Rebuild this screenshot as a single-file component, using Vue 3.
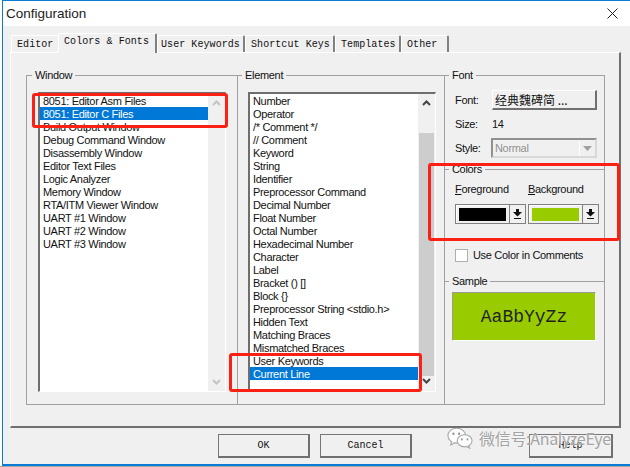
<script setup>
const tabs = [
  { name: 'Editor', cls: 't-editor' },
  { name: 'Colors & Fonts', cls: 't-colors' },
  { name: 'User Keywords', cls: 't-user' },
  { name: 'Shortcut Keys', cls: 't-short' },
  { name: 'Templates', cls: 't-tmpl' },
  { name: 'Other', cls: 't-other' }
]
const windows = [
  '8051: Editor Asm Files', '8051: Editor C Files', 'Build Output Window', 'Debug Command Window',
  'Disassembly Window', 'Editor Text Files', 'Logic Analyzer', 'Memory Window',
  'RTA/ITM Viewer Window', 'UART #1 Window', 'UART #2 Window', 'UART #3 Window'
]
const elements = [
  'Number', 'Operator', '/* Comment */', '// Comment', 'Keyword', 'String', 'Identifier',
  'Preprocessor Command', 'Decimal Number', 'Float Number', 'Octal Number', 'Hexadecimal Number',
  'Character', 'Label', 'Bracket () []', 'Block {}', 'Preprocessor String <stdio.h>', 'Hidden Text',
  'Matching Braces', 'Mismatched Braces', 'User Keywords', 'Current Line'
]
</script>

<template>
  <div class="desk">
    <div class="win">
      <header class="title">
        <span class="title-text">Configuration</span>
        <svg class="close" width="11" height="11" viewBox="0 0 11 11"><path d="M.5.5l10 10M10.500.5l-10 10" stroke="#222" stroke-width="1" fill="none"/></svg>
      </header>
      <main class="body">
        <nav class="tabs">
          <div v-for="(t, i) in tabs" :key="t.name" class="tab" :class="[t.cls, { active: i === 1 }]">{{ t.name }}</div>
        </nav>
        <section class="panel">
          <div class="groups">
            <fieldset class="group g-window">
              <legend>Window</legend>
              <div class="list">
                <div class="items">
                  <div v-for="(w, i) in windows" :key="w" class="item" :class="{ sel: i === 1 }">{{ w }}</div>
                </div>
                <div class="scroll off">
                  <svg width="9" height="6" viewBox="0 0 9 6"><path d="M1 5l3.500-3.500L8 5" stroke="#c4c4c4" stroke-width="2" fill="none"/></svg>
                  <svg width="9" height="6" viewBox="0 0 9 6"><path d="M1 1l3.500 3.500L8 1" stroke="#c4c4c4" stroke-width="2" fill="none"/></svg>
                </div>
              </div>
            </fieldset>
            <fieldset class="group g-element">
              <legend>Element</legend>
              <div class="list">
                <div class="items">
                  <div v-for="(e, i) in elements" :key="e" class="item" :class="{ sel: i === 21 }">{{ e }}</div>
                </div>
                <div class="scroll on">
                  <svg class="arrow" width="9" height="6" viewBox="0 0 9 6"><path d="M1 5l3.500-3.500L8 5" stroke="#444" stroke-width="2" fill="none"/></svg>
                  <div class="thumb"></div>
                  <svg class="arrow" width="9" height="6" viewBox="0 0 9 6"><path d="M1 1l3.500 3.500L8 1" stroke="#444" stroke-width="2" fill="none"/></svg>
                </div>
              </div>
            </fieldset>
            <fieldset class="group g-font">
              <legend>Font</legend>
              <div class="row r-font">
                <span class="lab">Font:</span>
                <div class="raised font-btn">经典魏碑简 ...</div>
              </div>
              <div class="row r-size"><span class="lab">Size:</span><span>14</span></div>
              <div class="row r-style">
                <span class="lab">Style:</span>
                <div class="combo">
                  <span>Normal</span>
                  <span class="combo-btn"><svg width="9" height="5" viewBox="0 0 9 5"><path d="M0 0h9L4.500 5z" fill="#a0a0a0"/></svg></span>
                </div>
              </div>
              <fieldset class="sub sub-colors">
                <legend>Colors</legend>
                <div class="pair">
                  <div class="col">
                    <div class="col-lab"><u>F</u>oreground</div>
                    <div class="swatch-btn">
                      <span class="swatch black"></span>
                      <span class="drop"><svg width="9" height="10" viewBox="0 0 9 10"><path d="M3 0h3v3h3L4.500 7.500 0 3h3zM1 9h7v1H1z" fill="#111"/></svg></span>
                    </div>
                  </div>
                  <div class="col">
                    <div class="col-lab"><u>B</u>ackground</div>
                    <div class="swatch-btn">
                      <span class="swatch green"></span>
                      <span class="drop"><svg width="9" height="10" viewBox="0 0 9 10"><path d="M3 0h3v3h3L4.500 7.500 0 3h3zM1 9h7v1H1z" fill="#111"/></svg></span>
                    </div>
                  </div>
                </div>
              </fieldset>
              <div class="check-row">
                <span class="check"></span>
                <span>Use Color in Comments</span>
              </div>
              <fieldset class="sub sub-sample">
                <legend>Sample</legend>
                <div class="sample">AaBbYyZz</div>
              </fieldset>
            </fieldset>
          </div>
        </section>
        <footer class="actions">
          <div class="raised btn b-ok">OK</div>
          <div class="raised btn b-cancel">Cancel</div>
          <div class="raised btn b-help">Help</div>
        </footer>
      </main>
    </div>
    <div class="strip"></div>

    <div class="mark m1"></div>
    <div class="mark m2"></div>
    <div class="mark m3"></div>

    <div class="wm">
      <svg width="26" height="22" viewBox="0 0 28 23">
        <ellipse cx="10.500" cy="9" rx="9.500" ry="8" fill="#fff" stroke="#a8a8a8" stroke-width="1.200"/>
        <path d="M5 15l-1 4 4.500-2.500" fill="#fff" stroke="#a8a8a8" stroke-width="1.200"/>
        <ellipse cx="19" cy="14.500" rx="8" ry="6.500" fill="#fff" stroke="#a8a8a8" stroke-width="1.200"/>
        <path d="M23 19.500l1.500 3-4-2" fill="#fff" stroke="#a8a8a8" stroke-width="1.200"/>
        <circle cx="7" cy="7" r="1.300" fill="#999"/><circle cx="13" cy="7" r="1.300" fill="#999"/>
        <circle cx="16" cy="13" r="1.100" fill="#999"/><circle cx="22" cy="13" r="1.100" fill="#999"/>
      </svg>
      <span>微信号:AnalyzeEye</span>
    </div>
  </div>
</template>

<style>
html, body { margin: 0; padding: 0; background: #fff; }
</style>

<style scoped>
.desk {
  position: relative;
  width: 630px;
  height: 467px;
  overflow: hidden;
  background: #fff;
  font: 11px/13px "Liberation Sans", Arial, "Noto Sans CJK SC", sans-serif;
  letter-spacing: -0.32px;
  color: #111;
}
.win {
  box-sizing: border-box;
  width: 628px;
  height: 466px;
  margin-left: 2px;
  border: 1px solid #0a7ad4;
  border-right: 0;
  border-bottom-width: 2px;
  display: flex;
  flex-direction: column;
  background: #f0f0f0;
}
.strip { height: 1px; background: #a8a8a8; }
.title {
  height: 25px;
  flex: none;
  background: #fff;
  display: flex;
  align-items: center;
  justify-content: space-between;
  padding: 0 12px 0 3px;
}
.title-text { font-size: 13.500px; letter-spacing: 0; color: #222; }
.body { flex: 1; padding: 7px 0 0 7px; display: flex; flex-direction: column; min-height: 0; }
.tabs {
  display: flex;
  align-items: flex-end;
  height: 19px;
  padding-left: 1px;
  position: relative;
  z-index: 1;
}
.tab {
  box-sizing: border-box;
  height: 17px;
  font: 10px/17px "Liberation Mono", monospace;
  color: #111;
  padding-left: 5px;
  border-top: 1px solid #fff;
  border-left: 1px solid #fff;
  border-right: 2px solid #808080;
  border-radius: 2px 2px 0 0;
  letter-spacing: 0.07px;
}
.tab.active { height: 20px; margin-bottom: -1px; background: #f0f0f0; line-height: 15px; padding-bottom: 3px; }
.t-editor { width: 47px; border-right: 0; }
.t-colors { width: 99px; }
.t-user { width: 88px; padding-left: 3px; }
.t-short { width: 90px; }
.t-tmpl { width: 66px; }
.t-other { width: 48px; }
.panel {
  box-sizing: border-box;
  width: 611px;
  height: 376px;
  flex: none;
  border-top: 1px solid #fff;
  border-left: 1px solid #fff;
  border-right: 2px solid #707070;
  border-bottom: 2px solid #707070;
  padding: 16px 0 0 15px;
}
.groups { display: flex; height: 336px; }
.group, .sub {
  box-sizing: border-box;
  margin: 0;
  min-width: 0;
  border: 1px solid #a0a0a0;
  padding: 0;
}
legend { padding: 0 3px; margin-left: -6px; line-height: 13px; }
.group { height: 336px; }
.g-window { width: 211px; padding: 10px 0 0 11px; border-right: 0; }
.g-element { width: 207px; padding: 10px 0 0 10px; border-right: 0; }
.g-font { width: 161px; padding: 0 0 0 10px; }
.list {
  box-sizing: border-box;
  width: 188px;
  height: 300px;
  display: flex;
  background: #fff;
  border-top: 2px solid #6e6e6e;
  border-left: 2px solid #6e6e6e;
  border-right: 1px solid #fff;
  border-bottom: 1px solid #fff;
}
.items { flex: 1; min-width: 0; }
.item { height: 13px; line-height: 15px; padding-left: 3px; white-space: nowrap; }
.item.sel { background: #0078d7; color: #fff; }
.scroll {
  width: 17px;
  flex: none;
  background: #f0f0f0;
  display: flex;
  flex-direction: column;
  align-items: center;
  box-sizing: border-box;
}
.scroll.off { justify-content: space-between; padding: 6px 0; }
.arrow { flex: none; margin-top: 6px; }
.thumb { width: 15px; height: 243px; background: #cdcdcd; margin: 27px 0 -4px; }
.row { display: flex; align-items: center; }
.lab { width: 37px; flex: none; }
.r-font { height: 20px; margin-top: 8px; }
.raised {
  box-sizing: border-box;
  background: #f0f0f0;
  border-top: 1px solid #fff;
  border-left: 1px solid #fff;
  border-right: 2px solid #707070;
  border-bottom: 2px solid #707070;
}
.font-btn { width: 105px; height: 20px; font: 12px/17px "Noto Sans CJK SC", sans-serif; letter-spacing: 0; padding-left: 2px; }
.r-size { height: 13px; margin-top: 8px; }
.r-style { height: 20px; margin-top: 7px; }
.combo {
  box-sizing: border-box;
  width: 106px;
  height: 20px;
  margin-left: -1px;
  border: 2px solid #909090;
  border-right-color: #d8d8d8;
  border-bottom-color: #d8d8d8;
  color: #909090;
  padding: 2px 0 0 2px;
  display: flex;
  justify-content: space-between;
}
.combo-btn {
  width: 15px;
  height: 15px;
  margin-top: -1px;
  display: flex;
  align-items: center;
  justify-content: center;
  border-left: 1px solid #fff;
}
.sub-colors { width: 159px; height: 66px; margin: 5px 0 0 -10px; border-left: 0; border-right: 0; border-bottom: 0; padding: 7px 0 0 10px; }
.sub-sample legend { margin-left: -3px; }
.pair { display: flex; gap: 2px; }
.col { width: 71px; }
.col-lab { height: 21px; }
.swatch-btn {
  box-sizing: border-box;
  height: 20px;
  display: flex;
  border: 1px solid #808080;
  box-shadow: inset 1px 1px 0 #fff;
  background: #f0f0f0;
}
.swatch { flex: 1; margin: 3px 3px 2px 3px; }
.black { background: #000; }
.green { background: #99cc00; }
.drop {
  width: 15px;
  flex: none;
  border-left: 1px solid #808080;
  background: #f0f0f0;
  display: flex;
  align-items: center;
  justify-content: center;
}
.check-row { display: flex; align-items: center; gap: 5px; height: 13px; margin-top: 20px; }
.check { box-sizing: border-box; width: 13px; height: 13px; border: 1px solid #b0b0b0; background: #fff; }
.sub-sample { width: 159px; margin: 13px 0 0 -10px; border-left: 0; border-right: 0; border-bottom: 0; padding: 4px 0 0 7px; }
.sample {
  box-sizing: border-box;
  width: 144px;
  height: 49px;
  background: #99cc00;
  border-top: 1px solid #999;
  border-left: 1px solid #999;
  border-right: 1px solid #fff;
  border-bottom: 1px solid #fff;
  font: 18px/48px "Liberation Mono", monospace;
  letter-spacing: 0;
  text-align: center;
  color: #222;
}
.actions { display: flex; padding: 6px 0 0 208px; }
.btn {
  height: 24px;
  border-top-color: #777;
  border-left-color: #777;
  text-align: center;
  font: 10px/21px "Liberation Mono", monospace;
  letter-spacing: 0;
}
.b-ok { width: 92px; margin-right: 10px; }
.b-cancel { width: 92px; margin-right: 117px; }
.b-help { width: 84px; }
.mark { position: absolute; box-sizing: border-box; border: 3px solid #fb2014; border-radius: 3px; }
.m1 { left: 32px; top: 93px; width: 196px; height: 35px; }
.m2 { left: 229px; top: 353px; width: 193px; height: 39px; }
.m3 { left: 428px; top: 163px; width: 192px; height: 78px; }
.wm {
  position: absolute;
  left: 447px;
  top: 427px;
  display: flex;
  align-items: center;
  gap: 6px;
  font: 16px/22px "Noto Sans CJK SC", sans-serif;
  letter-spacing: -0.3px;
  color: #a4a4a4;
  text-shadow: 0 0 2px #fff;
  white-space: nowrap;
}
</style>
